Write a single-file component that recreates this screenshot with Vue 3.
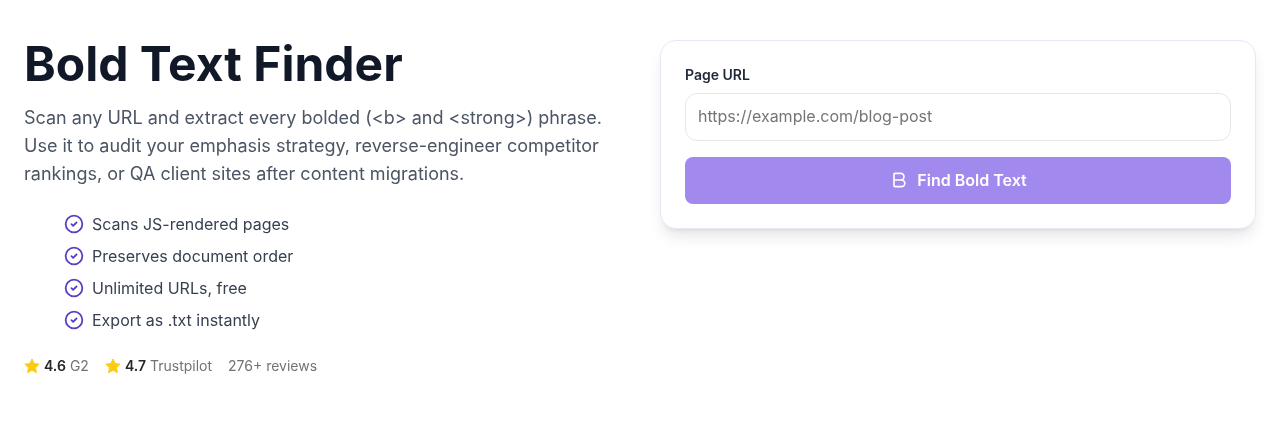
<script setup>
const features = ['Scans JS-rendered pages', 'Preserves document order', 'Unlimited URLs, free', 'Export as .txt instantly']
</script>

<template>
  <div class="page">
    <section class="intro">
      <h1>Bold Text Finder</h1>
      <p class="lead">Scan any URL and extract every bolded (&lt;b&gt; and &lt;strong&gt;) phrase. Use it to audit your emphasis strategy, reverse-engineer competitor rankings, or QA client sites after content migrations.</p>
      <ul class="features">
        <li v-for="f in features" :key="f">
          <svg class="check" viewBox="0 0 24 24" fill="none" stroke="currentColor" stroke-width="2.2" stroke-linecap="round" stroke-linejoin="round">
            <circle cx="12" cy="12" r="10" />
            <path d="m9 12.200 2 2 4-4" />
          </svg>
          <span>{{ f }}</span>
        </li>
      </ul>
      <div class="ratings">
        <span class="rating">
          <svg class="star" viewBox="0 0 24 24"><path d="M12 1.500l3.300 6.800 7.400 1-5.400 5.300 1.300 7.400-6.600-3.600-6.600 3.600 1.300-7.400-5.400-5.300 7.400-1z" stroke="#facc15" stroke-width="1.500" stroke-linejoin="round" /></svg>
          <b>4.6</b> G2
        </span>
        <span class="rating">
          <svg class="star" viewBox="0 0 24 24"><path d="M12 1.500l3.300 6.800 7.400 1-5.400 5.300 1.300 7.400-6.600-3.600-6.600 3.600 1.300-7.400-5.400-5.300 7.400-1z" stroke="#facc15" stroke-width="1.500" stroke-linejoin="round" /></svg>
          <b>4.7</b> Trustpilot
        </span>
        <span>276+ reviews</span>
      </div>
    </section>
    <section class="card">
      <label for="url">Page URL</label>
      <input id="url" type="text" placeholder="https://example.com/blog-post" />
      <button type="button">
        <svg class="bold" viewBox="0 0 24 24" fill="none" stroke="currentColor" stroke-width="2" stroke-linecap="round" stroke-linejoin="round">
          <path d="M6 12h9a4 4 0 0 1 0 8H7a1 1 0 0 1-1-1V5a1 1 0 0 1 1-1h7a4 4 0 0 1 0 8" />
        </svg>
        Find Bold Text
      </button>
    </section>
  </div>
</template>

<style scoped>
.page {
  box-sizing: border-box;
  width: 1280px;
  height: 440px;
  padding: 40px 24px 0;
  display: grid;
  grid-template-columns: 596px 596px;
  gap: 40px;
  align-items: start;
  font-family: Inter, "Liberation Sans", sans-serif;
  color: #111827;
  will-change: transform;
}
h1 {
  margin: 0 0 16px;
  font-size: 48px;
  line-height: 48px;
  font-weight: 700;
  color: #111827;
}
.lead {
  margin: 0 0 24px;
  font-size: 18px;
  line-height: 28px;
  color: #4b5563;
}
.features {
  list-style: none;
  margin: 0 0 24px;
  padding: 0 0 0 40px;
  display: flex;
  flex-direction: column;
  gap: 8px;
}
.features li {
  display: flex;
  align-items: center;
  gap: 8px;
  font-size: 16px;
  line-height: 24px;
  color: #374151;
}
.check {
  width: 20px;
  height: 20px;
  color: #5b3fc4;
  flex: none;
}
.ratings {
  display: flex;
  gap: 16px;
  font-size: 14px;
  line-height: 20px;
  color: #737373;
}
.rating {
  display: inline-flex;
  align-items: center;
  gap: 4px;
}
.rating b {
  font-weight: 600;
  color: #27272a;
}
.star {
  width: 16px;
  height: 16px;
  fill: #facc15;
  flex: none;
}
.card {
  box-sizing: border-box;
  height: 189px;
  padding: 24px;
  display: flex;
  flex-direction: column;
  background: #fff;
  border: 1px solid #e9e7f5;
  border-radius: 16px;
  box-shadow: 0 10px 15px -3px rgba(0, 0, 0, 0.1), 0 4px 6px -4px rgba(0, 0, 0, 0.1);
}
label {
  font-size: 14px;
  line-height: 20px;
  font-weight: 600;
  color: #1f2937;
  margin-bottom: 8px;
}
input {
  box-sizing: border-box;
  height: 48px;
  padding: 0 12px 2px;
  border: 1px solid #e5e7eb;
  border-radius: 12px;
  font: inherit;
  font-size: 16px;
  outline: none;
  margin-bottom: 16px;
}
input::placeholder {
  color: #757575;
  opacity: 1;
}
button {
  height: 47px;
  border: 0;
  border-radius: 8px;
  background: #a289ee;
  color: #fff;
  font: inherit;
  font-size: 16px;
  font-weight: 600;
  display: flex;
  align-items: center;
  justify-content: center;
  gap: 8px;
  padding: 0 0 1px;
}
.bold {
  width: 20px;
  height: 20px;
  flex: none;
}
</style>
